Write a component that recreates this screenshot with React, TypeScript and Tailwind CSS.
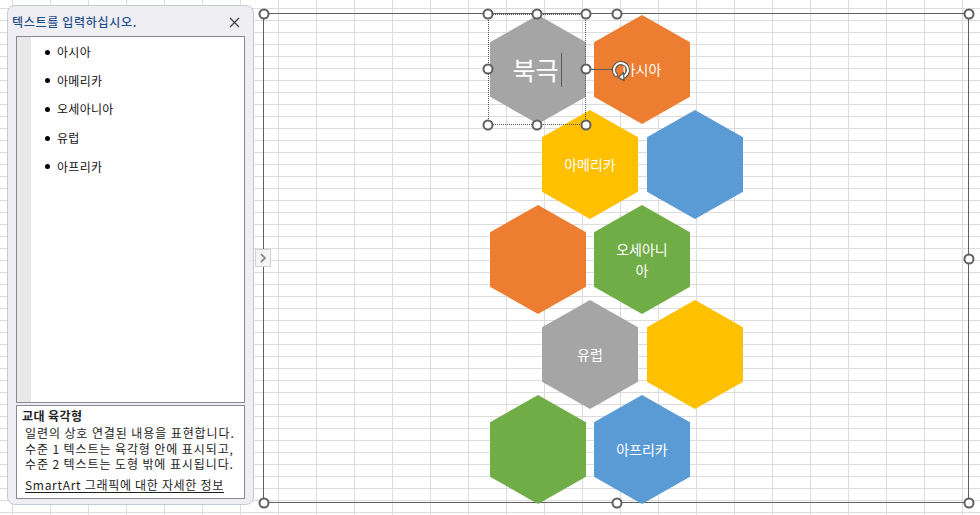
import React from "react";

const FONT = "font-['Noto_Sans_CJK_KR','Noto_Sans',sans-serif]";

type Hex = { left: number; top: number; color: string; label?: React.ReactNode; big?: boolean };

const hexes: Hex[] = [
  { left: 226, top: 1, color: "#A5A5A5", big: true },
  { left: 330, top: 1, color: "#ED7D31", label: "아시아" },
  { left: 278, top: 96, color: "#FFC000", label: "아메리카" },
  { left: 383, top: 96, color: "#5B9BD5" },
  { left: 226, top: 191, color: "#ED7D31" },
  { left: 330, top: 191, color: "#70AD47", label: (<>오세아니<br />아</>) },
  { left: 278, top: 286, color: "#A5A5A5", label: "유럽" },
  { left: 383, top: 286, color: "#FFC000" },
  { left: 226, top: 381, color: "#70AD47" },
  { left: 330, top: 381, color: "#5B9BD5", label: "아프리카" },
];

const frameHandles = [
  [0, 0], [353, 0], [705, 0],
  [0, 245], [705, 245],
  [0, 489], [353, 489], [705, 489],
];

const selHandles = [
  [224, 0], [273, 0], [322, 0],
  [224, 55], [322, 55],
  [224, 111], [273, 111], [322, 111],
];

function Handle({ x, y }: { x: number; y: number }) {
  return (
    <span
      className="absolute w-[11px] h-[11px] rounded-full border-2 border-[#5f5f5f] bg-white -translate-x-1/2 -translate-y-1/2 z-20"
      style={{ left: x, top: y }}
    />
  );
}

const items = ["아시아", "아메리카", "오세아니아", "유럽", "아프리카"];

export default function App() {
  return (
    <div
      className={`relative w-[980px] h-[515px] overflow-hidden bg-white flex items-start ${FONT} [background-image:linear-gradient(to_right,#dcdcdc_1px,transparent_1px),linear-gradient(to_bottom,#dcdcdc_1px,transparent_1px)] [background-size:38px_12px] [background-position:12px_8px]`}
    >
      {/* Text pane */}
      <div className="ml-[7px] mt-[5px] w-[247px] h-[500px] rounded-[8px] border border-[#c3cbd5] bg-[#eeeef3] flex flex-col px-[8px] pb-[5px] shrink-0">
        <div className="h-[30px] flex items-center justify-between -ml-[4px] pr-[4px] pt-[2px]">
          <span className="text-[12px] tracking-[0.7px] font-medium text-[#1f4e8c] leading-none">텍스트를 입력하십시오.</span>
          <svg width="11" height="11" viewBox="0 0 11 11" className="mr-[1px]">
            <path d="M1 1 L10 10 M10 1 L1 10" stroke="#404040" strokeWidth="1.2" />
          </svg>
        </div>
        <div className="h-[367px] border border-[#8a8a8a] bg-white flex">
          <div className="w-[14px] bg-[#e8e8e8] shrink-0" />
          <ul className="pt-[1px] pl-[14px] flex flex-col">
            {items.map((t) => (
              <li key={t} className="h-[28.6px] flex items-center text-[12px] tracking-[0.3px] text-[#111]">
                <span className="w-[5px] h-[5px] rounded-full bg-black mr-[7px]" />
                {t}
              </li>
            ))}
          </ul>
        </div>
        <div className="mt-[2px] h-[94px] border border-[#8a8a8a] bg-white pl-[5px] pr-[2px] pt-[1px] text-[12px] text-[#222]">
          <div className="font-bold leading-[18px] tracking-[0.4px]">교대 육각형</div>
          <div className="pl-[3px] leading-[15.5px] tracking-[0.9px]">
            일련의 상호 연결된 내용을 표현합니다.
            <br />
            수준 1 텍스트는 육각형 안에 표시되고,
            <br />
            수준 2 텍스트는 도형 밖에 표시됩니다.
          </div>
          <div className="pl-[3px] mt-[5px] leading-[16px] tracking-[0.7px] underline underline-offset-2">SmartArt 그래픽에 대한 자세한 정보</div>
        </div>
      </div>

      {/* SmartArt frame */}
      <div className="relative ml-[9px] mt-[13px] w-[706px] h-[490px] border border-[#5f5f5f] shrink-0">
        {hexes.map((h, i) => (
          <div
            key={i}
            className="absolute w-[96px] h-[109px] [clip-path:polygon(50%_0,100%_25%,100%_75%,50%_100%,0_75%,0_25%)] flex items-center justify-center text-center text-white text-[14px] leading-[21px]"
            style={{ left: h.left, top: h.top, backgroundColor: h.color }}
          >
            {h.big ? (
              <span className="flex items-center text-[25px] leading-none text-white -translate-x-[1px]">
                북극
                <span className="ml-[2px] w-[1px] h-[34px] bg-[#5a5a5a]" />
              </span>
            ) : (
              h.label
            )}
          </div>
        ))}

        {/* selection box */}
        <div className="absolute left-[224px] top-0 w-[98px] h-[111px] border border-dotted border-[#555] z-10" />
        <div className="absolute left-[322px] top-[55px] w-[26px] h-[1px] bg-[#5f5f5f] z-10" />
        <svg width="22" height="24" viewBox="0 0 22 24" className="absolute left-[346px] top-[44px] z-20">
          <path d="M6 17 A7 7 0 1 1 12 19" fill="none" stroke="#555" strokeWidth="4.2" strokeLinecap="round" />
          <path d="M6 17 A7 7 0 1 1 12 19" fill="none" stroke="#fff" strokeWidth="2" strokeLinecap="round" />
          <path d="M13.5 14.5 L8.5 19.5 L14 22.5 Z" fill="#fff" stroke="#555" strokeWidth="1.2" strokeLinejoin="round" />
        </svg>

        {frameHandles.map(([x, y], i) => (
          <Handle key={"f" + i} x={x} y={y} />
        ))}
        {selHandles.map(([x, y], i) => (
          <Handle key={"s" + i} x={x} y={y} />
        ))}
      </div>

      {/* pane toggle */}
      <div className="absolute left-[255px] top-[249px] w-[16px] h-[18px] bg-[#f4f4f4] border border-[#d2d2d2] flex items-center justify-center z-30">
        <svg width="8" height="10" viewBox="0 0 8 10">
          <path d="M2 1 L6 5 L2 9" fill="none" stroke="#8a8a8a" strokeWidth="1.8" />
        </svg>
      </div>
    </div>
  );
}
